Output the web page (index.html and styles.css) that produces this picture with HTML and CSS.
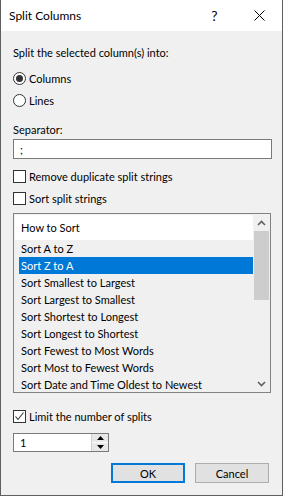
FILE: index.html
```html
<!DOCTYPE html>
<html>
<head>
<meta charset="utf-8">
<link rel="stylesheet" href="styles.css">
</head>
<body>
<div class="window">
  <div class="titlebar">
    <span class="title">Split Columns</span>
    <span class="tb-btn help">?</span>
    <span class="tb-btn close">
      <svg width="11" height="11" viewBox="0 0 11 11"><path d="M0.5 0.5L10.5 10.5M10.5 0.5L0.5 10.5" stroke="#000" stroke-width="1" fill="none"/></svg>
    </span>
  </div>
  <div class="content">
    <div class="row intro">Split the selected column(s) into:</div>
    <div class="row radio-row first"><span class="radio checked"></span>Columns</div>
    <div class="row radio-row second"><span class="radio"></span>Lines</div>
    <div class="row sep-label">Separator:</div>
    <div class="textbox">;</div>
    <div class="row check-row cb1"><span class="check"></span>Remove duplicate split strings</div>
    <div class="row check-row cb2"><span class="check"></span>Sort split strings</div>
    <div class="listbox">
      <div class="list-main">
        <div class="list-header">How to Sort</div>
        <div class="list-items">
          <div class="item">Sort A to Z</div>
          <div class="item selected">Sort Z to A</div>
          <div class="item">Sort Smallest to Largest</div>
          <div class="item">Sort Largest to Smallest</div>
          <div class="item">Sort Shortest to Longest</div>
          <div class="item">Sort Longest to Shortest</div>
          <div class="item">Sort Fewest to Most Words</div>
          <div class="item">Sort Most to Fewest Words</div>
          <div class="item">Sort Date and Time Oldest to Newest</div>
        </div>
      </div>
      <div class="scrollbar">
        <div class="sb-arrow"><svg width="9" height="6" viewBox="0 0 9 6"><path d="M1 5L4.5 1.5L8 5" stroke="#606060" stroke-width="1.6" fill="none"/></svg></div>
        <div class="sb-track"><div class="sb-thumb"></div></div>
        <div class="sb-arrow"><svg width="9" height="6" viewBox="0 0 9 6"><path d="M1 1L4.5 4.5L8 1" stroke="#606060" stroke-width="1.6" fill="none"/></svg></div>
      </div>
    </div>
    <div class="row check-row limit"><span class="check checked"><svg width="11" height="11" viewBox="0 0 11 11"><path d="M1.5 5.5L4 8.5L9.5 1.5" stroke="#333" stroke-width="1.1" fill="none"/></svg></span>Limit the number of splits</div>
    <div class="spin">
      <span class="spin-value">1</span>
      <span class="spin-btns">
        <span class="spin-btn"><svg width="7" height="4" viewBox="0 0 7 4"><path d="M0 4L3.5 0L7 4Z" fill="#000"/></svg></span>
        <span class="spin-btn"><svg width="7" height="4" viewBox="0 0 7 4"><path d="M0 0L3.5 4L7 0Z" fill="#000"/></svg></span>
      </span>
    </div>
    <div class="buttons">
      <span class="btn default">OK</span>
      <span class="btn">Cancel</span>
    </div>
  </div>
</div>
</body>
</html>
```
FILE: styles.css
```css
html, body {
  margin: 0;
  padding: 0;
  background: #ffffff;
}
body {
  font-family: "Lato", "Liberation Sans", sans-serif;
  font-size: 11px;
  color: #000;
}
.window {
  width: 283px;
  height: 496px;
  box-sizing: border-box;
  border-left: 1px solid #5f5f5f;
  border-right: 1px solid #5f5f5f;
  border-bottom: 1px solid #5f5f5f;
  display: flex;
  flex-direction: column;
  background: #f0f0f0;
}
.titlebar {
  height: 31px;
  flex: none;
  background: #fff;
  display: flex;
  align-items: center;
  padding-left: 8px;
}
.title {
  font-size: 12px;
  flex: 1;
}
.tb-btn {
  width: 46px;
  height: 31px;
  display: flex;
  align-items: center;
  justify-content: center;
}
.help {
  font-size: 14px;
  padding-left: 3px;
  box-sizing: border-box;
}
.close svg { display: block; }
.content {
  flex: 1;
  padding: 0 10px 0 12px;
  display: flex;
  flex-direction: column;
}
.row {
  height: 16px;
  display: flex;
  align-items: center;
  flex: none;
}
.intro { margin-top: 13px; }
.radio-row.first { margin-top: 10px; }
.radio-row.second { margin-top: 6px; }
.sep-label { margin-top: 13px; }
.radio {
  width: 13px;
  height: 13px;
  box-sizing: border-box;
  border: 1px solid #333;
  border-radius: 50%;
  background: #fff;
  margin-right: 3px;
  display: flex;
  align-items: center;
  justify-content: center;
}
.radio.checked::after {
  content: "";
  width: 7px;
  height: 7px;
  border-radius: 50%;
  background: #333;
}
.textbox {
  margin-top: 2px;
  height: 20px;
  box-sizing: border-box;
  border: 1px solid #7a7a7a;
  background: #fff;
  padding-left: 6px;
  display: flex;
  align-items: center;
  flex: none;
}
.check {
  width: 13px;
  height: 13px;
  box-sizing: border-box;
  border: 1px solid #333;
  background: #fff;
  margin-right: 3px;
  display: flex;
  align-items: center;
  justify-content: center;
}
.check svg { display: block; }
.cb1 { margin-top: 9px; }
.cb2 { margin-top: 6px; }
.listbox {
  margin-top: 7px;
  width: 258px;
  height: 180px;
  box-sizing: border-box;
  border: 1px solid #828282;
  display: flex;
  flex: none;
  overflow: hidden;
}
.list-main {
  flex: 1;
  display: flex;
  flex-direction: column;
  overflow: hidden;
}
.list-header {
  margin: 1px 0 0 1px;
  height: 25px;
  background: #fff;
  display: flex;
  align-items: center;
  padding-left: 6px;
  flex: none;
}
.list-items {
  padding-left: 5px;
}
.item {
  height: 17px;
  display: flex;
  align-items: center;
  padding-left: 2px;
  white-space: nowrap;
}
.item.selected {
  background: #0078d7;
  color: #fff;
}
.scrollbar {
  width: 17px;
  flex: none;
  display: flex;
  flex-direction: column;
  background: #f0f0f0;
}
.sb-arrow {
  height: 17px;
  flex: none;
  display: flex;
  align-items: center;
  justify-content: center;
}
.sb-arrow svg { display: block; }
.sb-track {
  flex: 1;
  padding: 0 1px;
}
.sb-thumb {
  height: 69px;
  background: #cdcdcd;
}
.limit { margin-top: 15px; }
.spin {
  margin-top: 9px;
  width: 96px;
  height: 19px;
  box-sizing: border-box;
  border: 1px solid #7a7a7a;
  background: #fff;
  display: flex;
  flex: none;
}
.spin-value {
  flex: 1;
  display: flex;
  align-items: center;
  padding-left: 6px;
}
.spin-btns {
  width: 16px;
  display: flex;
  flex-direction: column;
  border-left: 1px solid #d0d0d0;
}
.spin-btn {
  flex: 1;
  display: flex;
  align-items: center;
  justify-content: center;
  background: #e8e8e8;
  border-bottom: 1px solid #fff;
}
.spin-btn:last-child { border-bottom: none; }
.spin-btn svg { display: block; }
.buttons {
  margin-top: 11px;
  display: flex;
  justify-content: flex-end;
  gap: 10px;
  padding-right: 3px;
}
.btn {
  width: 74px;
  height: 20px;
  box-sizing: border-box;
  border: 1px solid #adadad;
  background: #e1e1e1;
  display: flex;
  align-items: center;
  justify-content: center;
}
.btn.default {
  border: 2px solid #0078d7;
}
```
